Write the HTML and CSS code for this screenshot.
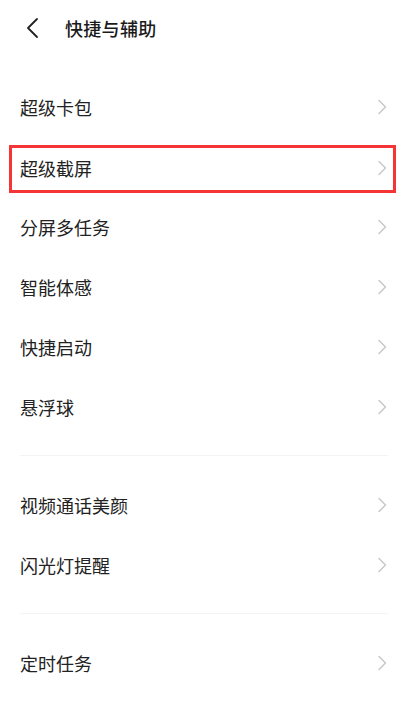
FILE: index.html
```html
<!DOCTYPE html>
<html lang="zh-CN">
<head>
<meta charset="utf-8">
<title>快捷与辅助</title>
<link rel="stylesheet" href="styles.css">
</head>
<body>
<div class="page">
  <header class="topbar">
    <span class="back">
      <svg width="14" height="22" viewBox="0 0 14 22"><polyline points="11,2 2,11 11,20" fill="none" stroke="#222" stroke-width="1.8" stroke-linecap="round" stroke-linejoin="round"/></svg>
    </span>
    <h1 class="title">快捷与辅助</h1>
  </header>

  <ul class="group first">
    <li class="row"><span class="label">超级卡包</span><svg class="chev" width="10" height="16" viewBox="0 0 10 16"><polyline points="2,1.5 8.5,8 2,14.5" fill="none" stroke="#c6c6c6" stroke-width="1.4" stroke-linecap="round" stroke-linejoin="round"/></svg></li>
    <li class="row highlighted"><span class="label">超级截屏</span><svg class="chev" width="10" height="16" viewBox="0 0 10 16"><polyline points="2,1.5 8.5,8 2,14.5" fill="none" stroke="#c6c6c6" stroke-width="1.4" stroke-linecap="round" stroke-linejoin="round"/></svg><span class="mark"></span></li>
    <li class="row"><span class="label">分屏多任务</span><svg class="chev" width="10" height="16" viewBox="0 0 10 16"><polyline points="2,1.5 8.5,8 2,14.5" fill="none" stroke="#c6c6c6" stroke-width="1.4" stroke-linecap="round" stroke-linejoin="round"/></svg></li>
    <li class="row"><span class="label">智能体感</span><svg class="chev" width="10" height="16" viewBox="0 0 10 16"><polyline points="2,1.5 8.5,8 2,14.5" fill="none" stroke="#c6c6c6" stroke-width="1.4" stroke-linecap="round" stroke-linejoin="round"/></svg></li>
    <li class="row"><span class="label">快捷启动</span><svg class="chev" width="10" height="16" viewBox="0 0 10 16"><polyline points="2,1.5 8.5,8 2,14.5" fill="none" stroke="#c6c6c6" stroke-width="1.4" stroke-linecap="round" stroke-linejoin="round"/></svg></li>
    <li class="row"><span class="label">悬浮球</span><svg class="chev" width="10" height="16" viewBox="0 0 10 16"><polyline points="2,1.5 8.5,8 2,14.5" fill="none" stroke="#c6c6c6" stroke-width="1.4" stroke-linecap="round" stroke-linejoin="round"/></svg></li>
  </ul>

  <div class="divider"></div>

  <ul class="group">
    <li class="row"><span class="label">视频通话美颜</span><svg class="chev" width="10" height="16" viewBox="0 0 10 16"><polyline points="2,1.5 8.5,8 2,14.5" fill="none" stroke="#c6c6c6" stroke-width="1.4" stroke-linecap="round" stroke-linejoin="round"/></svg></li>
    <li class="row"><span class="label">闪光灯提醒</span><svg class="chev" width="10" height="16" viewBox="0 0 10 16"><polyline points="2,1.5 8.5,8 2,14.5" fill="none" stroke="#c6c6c6" stroke-width="1.4" stroke-linecap="round" stroke-linejoin="round"/></svg></li>
  </ul>

  <div class="divider"></div>

  <ul class="group">
    <li class="row"><span class="label">定时任务</span><svg class="chev" width="10" height="16" viewBox="0 0 10 16"><polyline points="2,1.5 8.5,8 2,14.5" fill="none" stroke="#c6c6c6" stroke-width="1.4" stroke-linecap="round" stroke-linejoin="round"/></svg></li>
  </ul>
</div>
</body>
</html>
```

FILE: styles.css
```css
* { box-sizing: border-box; }

html, body {
  margin: 0;
  padding: 0;
  background: #ffffff;
}

body {
  font-family: "Noto Sans CJK SC", "Noto Sans", sans-serif;
  color: #222222;
}

.page {
  width: 410px;
  min-height: 710px;
  background: #fff;
}

.topbar {
  height: 56px;
  display: flex;
  align-items: center;
  padding-left: 26px;
}

.back {
  display: flex;
  width: 14px;
  height: 22px;
}

.title {
  margin: 0 0 0 25px;
  font-size: 18px;
  font-weight: 500;
  line-height: 1;
  color: #1a1a1a;
  letter-spacing: 0.3px;
}

.group {
  list-style: none;
  margin: 0;
  padding: 0;
}

.group.first {
  margin-top: 21px;
}

.row {
  position: relative;
  height: 60px;
  display: flex;
  align-items: center;
  justify-content: space-between;
  padding: 0 23px 0 20px;
}

.label {
  font-size: 18px;
  line-height: 1;
  color: #222222;
}

.chev {
  display: block;
}

.highlighted .chev {
  margin-top: 2px;
}

.highlighted .label {
  margin-top: 2px;
}

.mark {
  position: absolute;
  left: 9px;
  right: 14px;
  top: 8px;
  bottom: 4px;
  border: 3px solid #f53535;
}

.divider {
  height: 1px;
  margin: 18px 22px 19px 20px;
  background: #f4f4f4;
}
```
